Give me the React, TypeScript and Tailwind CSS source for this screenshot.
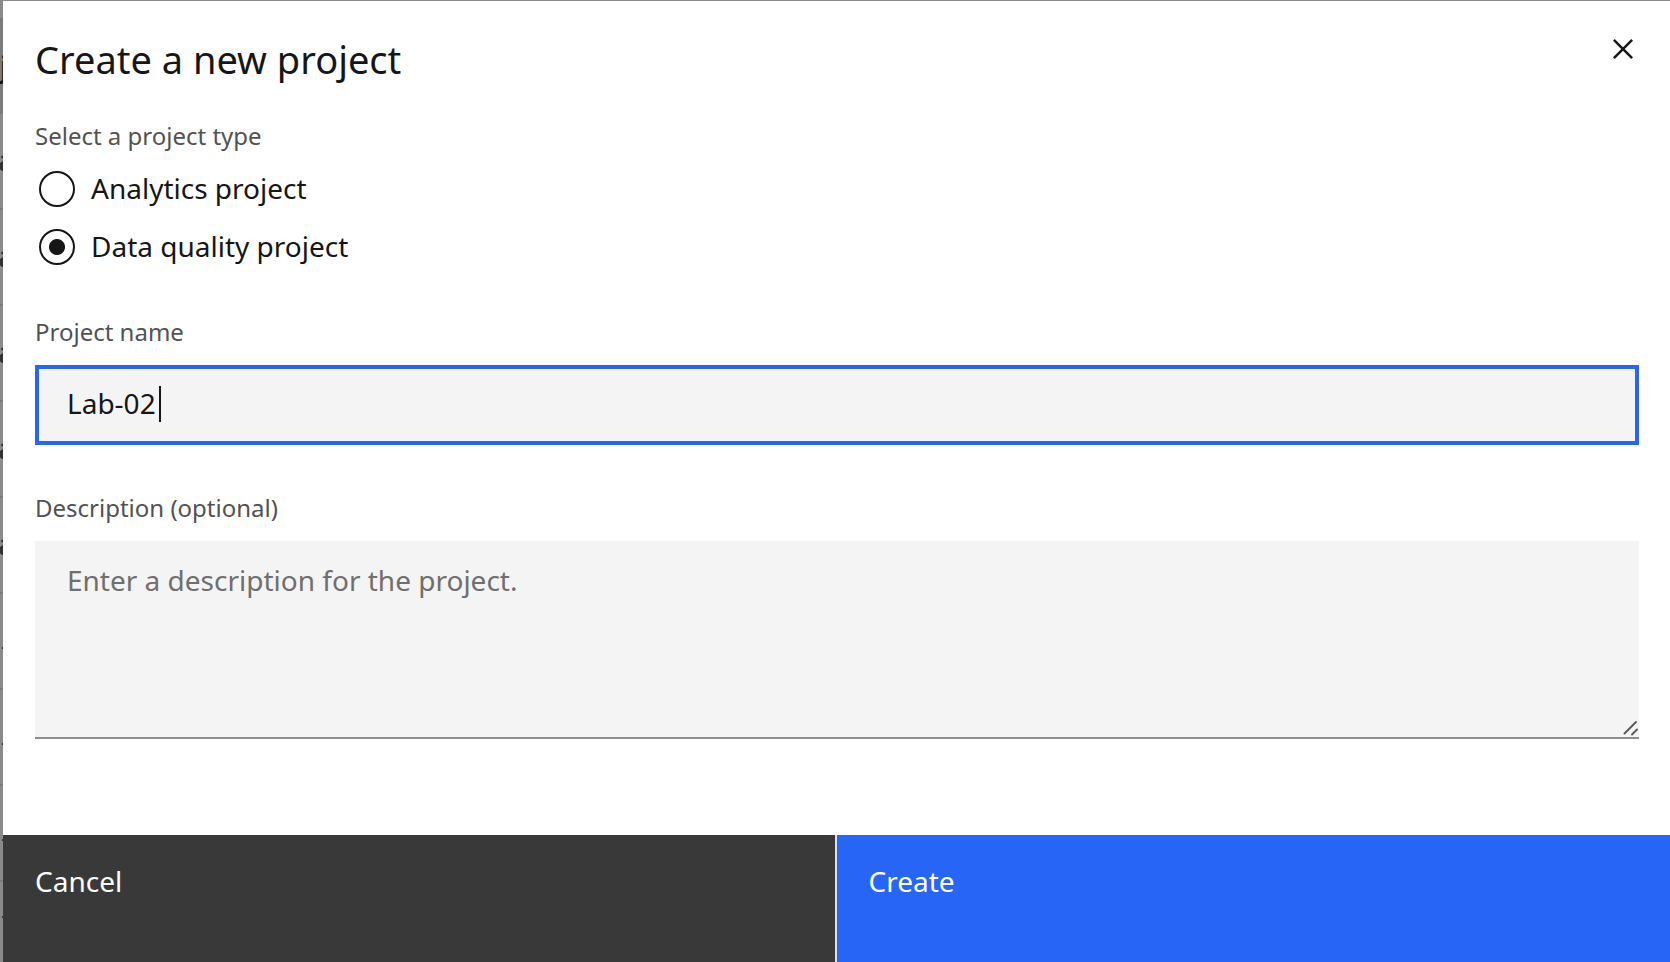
import { useState } from "react";

const rows = ["a", "a", "a", "a", "a", "-", "-", "-", "-"];

function Backdrop() {
  return (
    <div
      aria-hidden="true"
      className="w-[3px] shrink-0 overflow-hidden bg-[#8a8a8a] pt-[18px] text-[28px] text-[#303030]"
    >
      <div className="flex h-24 w-6 items-center bg-[#7b7b7b] font-semibold text-[#161616]">
        j
      </div>
      {rows.map((mark, index) => (
        <div
          key={index}
          className="flex h-24 w-6 items-center border-b-2 border-[#7b7b7b] last:h-14 last:border-b-0"
        >
          <span className={mark === "a" ? "-ml-0.5 pb-0.5 font-semibold" : "ml-px pt-2 text-2xl"}>{mark}</span>
        </div>
      ))}
    </div>
  );
}

const projectTypes = ["Analytics project", "Data quality project"];

export default function App() {
  const [type, setType] = useState(projectTypes[1]);
  const [name, setName] = useState("Lab-02");

  return (
    <div className="flex h-screen min-h-[960px] overflow-hidden bg-[#8a8a8a] font-['Noto_Sans',sans-serif] text-[28px] text-[#161616]">
      <Backdrop />
      <form
        role="dialog"
        aria-labelledby="dialog-title"
        className="mt-px flex flex-1 flex-col bg-white"
        onSubmit={(event) => event.preventDefault()}
      >
        <header className="flex h-[119px] items-start justify-between pl-8">
          <h1 id="dialog-title" className="pt-[34px] text-[38px] leading-[48px]">
            Create a new project
          </h1>
          <button type="button" aria-label="Close" className="flex h-24 w-[94px] items-center justify-center">
            <svg viewBox="0 0 32 32" className="size-10" fill="currentColor">
              <path d="M24 9.4 22.6 8 16 14.6 9.4 8 8 9.4l6.6 6.6L8 22.6 9.4 24l6.6-6.6 6.6 6.6 1.4-1.4-6.6-6.6L24 9.4z" />
            </svg>
          </button>
        </header>

        <div className="flex-1 pr-[31px] pl-8">
          <fieldset>
            <legend className="text-2xl leading-8 text-[#525252]">Select a project type</legend>
            <div className="flex flex-col gap-[22px] pt-[19px] pl-1">
              {projectTypes.map((option) => (
                <label key={option} className="flex h-9 items-center gap-4">
                  <input
                    type="radio"
                    name="project-type"
                    checked={type === option}
                    onChange={() => setType(option)}
                    className="size-9 appearance-none rounded-full border-2 border-[#161616] checked:bg-[radial-gradient(circle,#161616_7.5px,transparent_8.5px)]"
                  />
                  <span className="pb-0.5">{option}</span>
                </label>
              ))}
            </div>
          </fieldset>

          <label htmlFor="project-name" className="mt-[51px] block text-2xl leading-8 text-[#525252]">
            Project name
          </label>
          <div className="relative mt-[17px]">
            <input
              id="project-name"
              value={name}
              onChange={(event) => setName(event.target.value)}
              className="block h-20 w-full border-4 border-[#2665f6] bg-[#f4f4f4] px-7 pb-1 caret-transparent outline-none"
            />
            <span aria-hidden="true" className="absolute top-[21px] left-[124px] h-9 w-0.5 bg-[#161616]" />
          </div>

          <label htmlFor="description" className="mt-[47px] block text-2xl leading-8 text-[#525252]">
            Description (optional)
          </label>
          <div className="relative mt-[17px]">
            <textarea
              id="description"
              placeholder="Enter a description for the project."
              className="block h-[198px] w-full resize-none border-b-2 border-[#8d8d8d] bg-[#f4f4f4] px-8 py-[19px] leading-10 outline-none placeholder:text-[#6f6f6f]"
            />
            <svg
              aria-hidden="true"
              viewBox="0 0 16 16"
              className="absolute right-0 bottom-[3px] size-4"
              stroke="#5c5c5c"
              strokeWidth="2"
              strokeLinecap="round"
            >
              <path d="M1.5 13.5 13 2M9 14.5l5-5" />
            </svg>
          </div>
        </div>

        <footer className="grid h-[127px] grid-cols-2 bg-[#e0e0e0] text-white">
          <button type="button" className="mr-0.5 flex items-start bg-[#393939] px-8 pt-[26px] leading-10">
            Cancel
          </button>
          <button type="submit" className="flex items-start bg-[#2665f6] px-8 pt-[26px] leading-10">
            Create
          </button>
        </footer>
      </form>
    </div>
  );
}
